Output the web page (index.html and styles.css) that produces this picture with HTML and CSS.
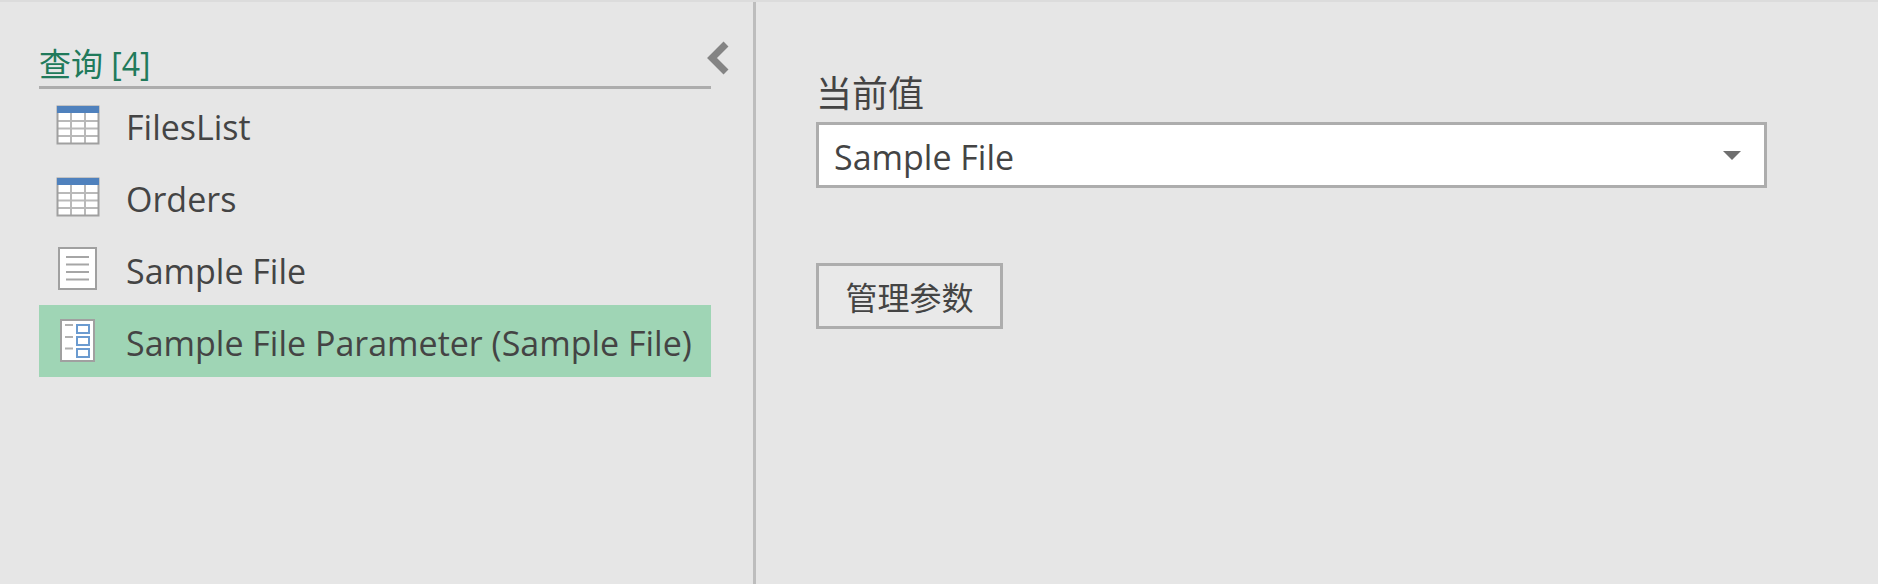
FILE: index.html
```html
<!DOCTYPE html>
<html lang="zh-CN">
<head>
  <meta charset="UTF-8" />
  <title>查询</title>
  <link rel="stylesheet" href="styles.css">
</head>
<body>
  <div class="app">
    <aside class="queries">
      <div class="queries-head">
        <h2 class="queries-title">查询 [4]</h2>
        <svg class="collapse" width="24" height="34" viewBox="0 0 24 34">
          <path d="M20 3 L6 17 L20 31" fill="none" stroke="#848484" stroke-width="7"/>
        </svg>
      </div>
      <ul class="query-list">
        <li class="query">
          <svg class="icon" width="44" height="40" viewBox="0 0 44 40">
            <rect x="1" y="1" width="42" height="38" fill="#fff"/>
            <path d="M15 8V38M29 8V38M2 16H42M2 23.500H42M2 31H42" stroke="#b9b9b9" stroke-width="2" fill="none"/>
            <rect x="1.500" y="1.500" width="41" height="37" fill="none" stroke="#a0a0a0" stroke-width="2"/>
            <rect x="1" y="1" width="42" height="7" fill="#4f81bd"/>
          </svg>
          <span>FilesList</span>
        </li>
        <li class="query">
          <svg class="icon" width="44" height="40" viewBox="0 0 44 40">
            <rect x="1" y="1" width="42" height="38" fill="#fff"/>
            <path d="M15 8V38M29 8V38M2 16H42M2 23.500H42M2 31H42" stroke="#b9b9b9" stroke-width="2" fill="none"/>
            <rect x="1.500" y="1.500" width="41" height="37" fill="none" stroke="#a0a0a0" stroke-width="2"/>
            <rect x="1" y="1" width="42" height="7" fill="#4f81bd"/>
          </svg>
          <span>Orders</span>
        </li>
        <li class="query">
          <svg class="icon" width="44" height="44" viewBox="0 0 44 44">
            <rect x="3" y="1" width="37" height="41" fill="#fff" stroke="#a0a0a0" stroke-width="2"/>
            <path d="M10 10H33M10 17.500H33M10 25H33M10 32.500H33" stroke="#a6a6a6" stroke-width="2" fill="none"/>
          </svg>
          <span>Sample File</span>
        </li>
        <li class="query selected">
          <svg class="icon" width="44" height="44" viewBox="0 0 44 44">
            <rect x="5" y="1" width="33" height="41" fill="#fff" stroke="#a0a0a0" stroke-width="2"/>
            <path d="M9 6H17M9 18H17M9 29.500H17" stroke="#b0b0b0" stroke-width="2" fill="none"/>
            <path d="M21 6H33V14H21ZM21 18H33V26H21ZM21 30H33V38H21Z" fill="#fff" stroke="#6b9bd0" stroke-width="2"/>
          </svg>
          <span>Sample File Parameter (Sample File)</span>
        </li>
      </ul>
    </aside>

    <main class="details">
      <label class="field-label">当前值</label>
      <div class="select">
        <span class="select-value">Sample File</span>
        <span class="arrow"></span>
      </div>
      <button class="manage-btn">管理参数</button>
    </main>
  </div>
</body>
</html>
```

FILE: styles.css
```css
html, body {
  margin: 0;
  padding: 0;
  height: 100%;
}
body {
  font-family: "Open Sans", "Noto Sans CJK SC", sans-serif;
  background: #e6e6e6;
  color: #444;
  overflow: hidden;
}
.app {
  display: flex;
  height: 584px;
  box-sizing: border-box;
  border-top: 2px solid #dcdcdc;
}
.queries {
  width: 756px;
  box-sizing: border-box;
  padding: 0 0 0 39px;
  border-right: 3px solid #bdbdbd;
}
.queries-head {
  display: flex;
  align-items: flex-start;
  height: 87px;
}
.queries-title {
  width: 672px;
  height: 87px;
  box-sizing: border-box;
  margin: 0;
  padding-top: 41px;
  border-bottom: 3px solid #adadad;
  color: #217a5b;
  font-size: 32px;
  font-weight: 400;
  line-height: 41px;
}
.collapse {
  flex: none;
  margin: 39px 0 0 -5px;
}
.query-list {
  list-style: none;
  margin: 0;
  padding: 0;
  width: 672px;
}
.query {
  display: flex;
  align-items: center;
  height: 72px;
  padding-left: 17px;
  font-size: 34px;
  white-space: nowrap;
}
.query .icon {
  flex: none;
  margin-right: 26px;
}
.query span {
  padding-top: 4px;
}
.selected {
  background: #9fd5b5;
}
.details {
  flex: 1;
  padding: 64px 0 0 60px;
}
.field-label {
  display: block;
  font-size: 36px;
  line-height: 56px;
}
.select {
  display: flex;
  align-items: center;
  justify-content: space-between;
  width: 951px;
  height: 66px;
  box-sizing: border-box;
  padding: 0 23px 0 15px;
  border: 3px solid #adadad;
  background: #fff;
  font-size: 34px;
}
.select-value {
  padding-top: 3px;
}
.arrow {
  width: 0;
  height: 0;
  border-left: 9px solid transparent;
  border-right: 9px solid transparent;
  border-top: 9px solid #6f6f6f;
}
.manage-btn {
  display: block;
  width: 187px;
  height: 66px;
  margin-top: 75px;
  padding: 0;
  border: 3px solid #adadad;
  background: #e9e9e9;
  color: #444;
  font-family: inherit;
  font-size: 32px;
}
```
